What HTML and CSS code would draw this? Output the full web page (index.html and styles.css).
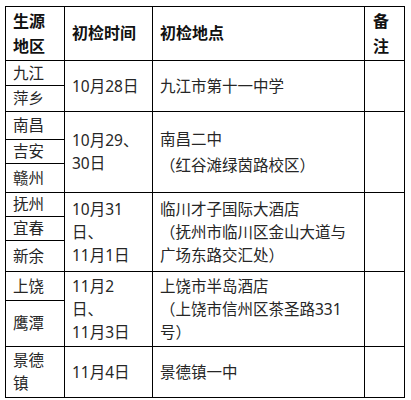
FILE: index.html
```html
<!DOCTYPE html>
<html lang="zh">
<head>
<meta charset="utf-8">
<link rel="stylesheet" href="styles.css">
</head>
<body>
<table class="sched">
  <colgroup>
    <col class="c1"><col class="c2"><col class="c3"><col class="c4">
  </colgroup>
  <tr class="h-head">
    <th>生源<br>地区</th>
    <th>初检时间</th>
    <th>初检地点</th>
    <th class="note">备<br>注</th>
  </tr>
  <tr class="h25">
    <td>九江</td>
    <td rowspan="2">10月28日</td>
    <td rowspan="2">九江市第十一中学</td>
    <td rowspan="2"></td>
  </tr>
  <tr class="h26"><td>萍乡</td></tr>
  <tr class="h28">
    <td>南昌</td>
    <td rowspan="3">10月29、<br>30日</td>
    <td rowspan="3"><div class="para">南昌二中</div><div class="para">（红谷滩绿茵路校区）</div></td>
    <td rowspan="3"></td>
  </tr>
  <tr class="h22"><td>吉安</td></tr>
  <tr class="h29"><td>赣州</td></tr>
  <tr class="h23">
    <td>抚州</td>
    <td rowspan="3">10月31<br>日、<br>11月1日</td>
    <td rowspan="3">临川才子国际大酒店<br>（抚州市临川区金山大道与<br>广场东路交汇处）</td>
    <td rowspan="3"></td>
  </tr>
  <tr class="h24"><td>宜春</td></tr>
  <tr class="h31"><td>新余</td></tr>
  <tr class="h29">
    <td>上饶</td>
    <td rowspan="2">11月2<br>日、<br>11月3日</td>
    <td rowspan="2">上饶市半岛酒店<br>（上饶市信州区茶圣路331<br>号）</td>
    <td rowspan="2"></td>
  </tr>
  <tr class="h46"><td>鹰潭</td></tr>
  <tr class="h51">
    <td>景德<br>镇</td>
    <td>11月4日</td>
    <td>景德镇一中</td>
    <td></td>
  </tr>
</table>
</body>
</html>
```
FILE: styles.css
```css
html, body {
  background: #ffffff;
}
body {
  margin: 6px 0 0 5px;
  font-family: "Noto Sans", "Noto Sans CJK SC", sans-serif;
  font-size: 15.5px;
  color: #262626;
}
.sched {
  border-collapse: collapse;
  table-layout: fixed;
  width: 400px;
}
.c1 { width: 59px; }
.c2 { width: 88px; }
.c3 { width: 212px; }
.c4 { width: 40px; }
.sched th,
.sched td {
  border: 1px solid #000000;
  padding: 0 5px 0 7px;
  text-align: left;
  vertical-align: middle;
  line-height: 23px;
  white-space: nowrap;
  overflow: hidden;
}
.sched th {
  font-size: 16px;
  font-weight: bold;
  color: #111111;
  line-height: 25px;
}
.sched th.note {
  padding-left: 8px;
}
.para {
  line-height: 26px;
}
.h-head { height: 54px; }
.h22 { height: 22px; }
.h23 { height: 23px; }
.h24 { height: 24px; }
.h25 { height: 25px; }
.h26 { height: 26px; }
.h28 { height: 28px; }
.h29 { height: 29px; }
.h31 { height: 31px; }
.h46 { height: 46px; }
.h51 { height: 51px; }
```
